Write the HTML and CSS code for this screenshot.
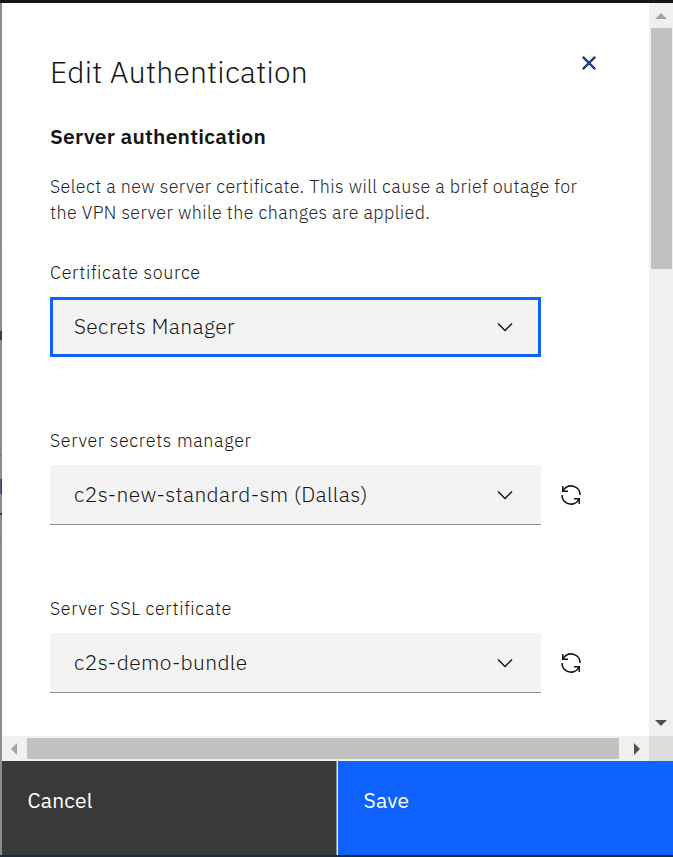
FILE: index.html
```html
<!DOCTYPE html>
<html lang="en">
<head>
<meta charset="utf-8">
<title>Edit Authentication</title>
<link rel="stylesheet" href="styles.css">
</head>
<body>
<svg class="defs" aria-hidden="true">
  <symbol id="chevron" viewBox="0 0 16 16"><path d="M8 11L3 6l.7-.7L8 9.6l4.3-4.3.7.7z"/></symbol>
  <symbol id="renew" viewBox="0 0 32 32"><path d="M12 10H6.78A11 11 0 0 1 27 16h2A13 13 0 0 0 6 7.68V4H4v8h8zM20 22h5.22A11 11 0 0 1 5 16H3a13 13 0 0 0 23 8.32V28h2v-8h-8z"/></symbol>
</svg>
<div class="backdrop">
  <i class="rule"></i><i class="status"></i><i class="rule faint"></i><i class="link"></i><i class="tab"></i><i class="rule last"></i>
</div>
<section class="panel">
  <div class="scroller">
    <main class="content">
      <header class="heading">
        <h1>Edit Authentication</h1>
        <button class="close" aria-label="Close"><svg viewBox="0 0 14 14"><path class="edge" d="M1.5 1.5l11 11M12.5 1.5l-11 11"/><path class="core" d="M1.8 1.8l10.4 10.4M12.2 1.8L1.8 12.2"/></svg></button>
      </header>
      <h2>Server authentication</h2>
      <p class="intro">Select a new server certificate. This will cause a brief outage for<br>the VPN server while the changes are applied.</p>
      <div class="field">
        <label>Certificate source</label>
        <div class="row"><div class="select focused"><span>Secrets Manager</span><svg class="chevron"><use href="#chevron"/></svg></div></div>
      </div>
      <div class="field">
        <label>Server secrets manager</label>
        <div class="row"><div class="select"><span>c2s-new-standard-sm (Dallas)</span><svg class="chevron"><use href="#chevron"/></svg></div><svg class="renew"><use href="#renew"/></svg></div>
      </div>
      <div class="field">
        <label>Server SSL certificate</label>
        <div class="row"><div class="select"><span>c2s-demo-bundle</span><svg class="chevron"><use href="#chevron"/></svg></div><svg class="renew"><use href="#renew"/></svg></div>
      </div>
    </main>
    <div class="vbar">
      <svg class="arrow up off" viewBox="0 0 12 6"><path d="M0 6L6 0l6 6z"/></svg>
      <div class="thumb"></div>
      <svg class="arrow down" viewBox="0 0 12 6"><path d="M0 0h12L6 6z"/></svg>
    </div>
    <div class="hbar">
      <svg class="arrow side off" viewBox="0 0 6 12"><path d="M6 0v12L0 6z"/></svg>
      <div class="thumb"></div>
      <svg class="arrow side right" viewBox="0 0 6 12"><path d="M0 0l6 6-6 6z"/></svg>
    </div>
    <div class="corner"></div>
  </div>
  <footer class="actions">
    <button class="cancel">Cancel</button>
    <button class="save">Save</button>
  </footer>
</section>
</body>
</html>
```
FILE: styles.css
```css
* { box-sizing: border-box; }
body {
  margin: 0;
  width: 673px;
  height: 857px;
  overflow: hidden;
  display: grid;
  grid-template-columns: 2px 671px;
  border-top: 3px solid #161616;
  border-bottom: 2px solid #1b2b3d;
  background: #fff;
  color: #161616;
  font-family: "IBM Plex Sans", Roboto, "Liberation Sans", sans-serif;
  font-variant-ligatures: none;
}
h1, h2, p { margin: 0; }
button { border: 0; padding: 0; background: none; color: inherit; font: inherit; text-align: left; }
.defs { position: absolute; width: 0; height: 0; }

.backdrop { background: #8b8b8b; display: flex; flex-direction: column; }
.backdrop i { display: block; flex: none; }
.rule { height: 1px; margin-top: 244px; background: #848484; }
.status { height: 9px; margin-top: 83px; background: #4c3c10; }
.rule.faint { margin-top: 115px; background: #777; }
.link { height: 15px; margin-top: 23px; background: linear-gradient(90deg, #69508f 50%, #173d91 50%); }
.tab { height: 2px; margin-top: 19px; background: #143f96; }
.rule.last { margin-top: 26px; background: #7b7b7b; }

.panel { display: grid; grid-template-rows: 758px 94px; }
.scroller { display: grid; grid-template: 733px 25px / 647px 24px; }
.content { padding: 48px 53px 0 48px; }
.heading { display: flex; justify-content: space-between; height: 72px; }
h1 { font-size: 30px; line-height: 42px; font-weight: 300; letter-spacing: .25px; }
.close { width: 14px; height: 14px; margin: 5px 0 0; }
.close svg { display: block; width: 14px; height: 14px; fill: none; stroke-linecap: round; }
.edge { stroke: #1b2030; stroke-width: 2.4; }
.core { stroke: #0f4fc4; stroke-width: 1.2; }
h2 { font-size: 21px; line-height: 27px; font-weight: 600; letter-spacing: .24px; }
.intro { margin-top: 24px; font-size: 17.9px; line-height: 26px; font-weight: 300; letter-spacing: .41px; color: #262626; white-space: nowrap; }
.field { height: 168px; }
.field label { display: block; height: 71px; padding-top: 34px; line-height: 26px; font-size: 17.9px; font-weight: 300; letter-spacing: .65px; }
.row { display: flex; align-items: center; gap: 18px; }
.select {
  display: flex;
  align-items: center;
  justify-content: space-between;
  width: 491px;
  height: 60px;
  padding: 0 24px;
  background: #f3f3f3;
  border-bottom: 1px solid #8d8d8d;
  font-size: 21px;
  line-height: 27px;
  font-weight: 300;
  letter-spacing: .37px;
}
.select.focused { border: 3px solid #0f62fe; padding: 0 21px 1px; }
.chevron { width: 24px; height: 24px; fill: #161616; }
.renew { width: 24px; height: 24px; fill: #161616; }

.vbar { background: #f0f0f0; display: flex; flex-direction: column; align-items: center; }
.arrow { fill: #505050; flex: none; }
.off { fill: #a3a3a3; }
.up, .down { width: 12px; height: 6px; }
.up { margin-top: 10px; }
.down { margin: auto 0 10px; }
.vbar .thumb { width: 21px; height: 241px; margin-top: 9px; background: #c1c1c1; }
.hbar { background: #f0f0f0; display: flex; align-items: center; }
.side { width: 6px; height: 12px; margin-left: 9px; }
.hbar .thumb { width: 592px; height: 21px; margin-left: 10px; background: #c1c1c1; }
.side.right { margin-left: 15px; }
.corner { background: #dcdcdc; }

.actions { display: grid; grid-template-columns: 335px 336px; color: #fff; font-size: 21px; line-height: 28px; }
.cancel, .save { padding: 25px 0 0 25.5px; display: flex; align-items: flex-start; letter-spacing: .2px; }
.cancel { background: #393939; border-right: 1px solid #8d8d8d; }
.save { background: #0f62fe; border-left: 1px solid #e8e8e8; }
```
